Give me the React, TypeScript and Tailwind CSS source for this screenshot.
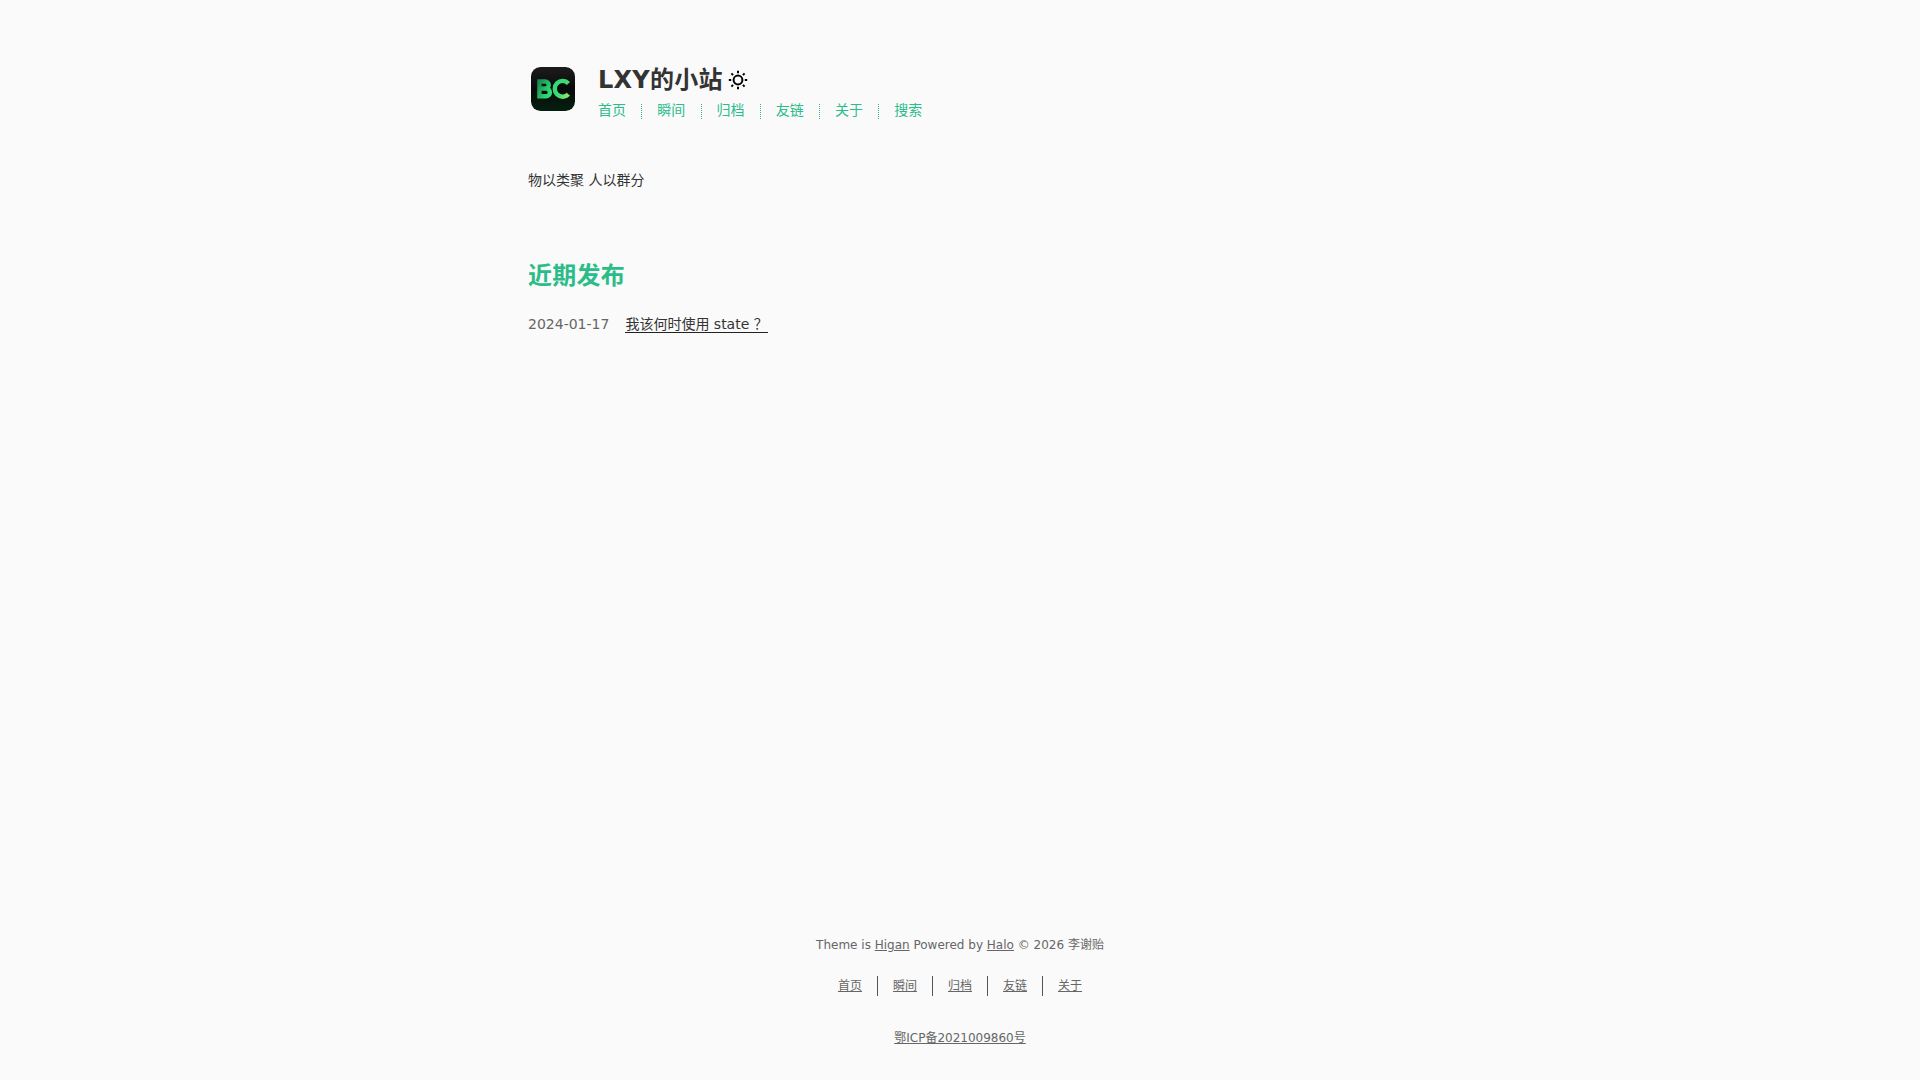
import React from 'react';

interface NavItem {
  label: string;
  href: string;
}

const navItems: NavItem[] = [
  { label: '首页', href: '#' },
  { label: '瞬间', href: '#' },
  { label: '归档', href: '#' },
  { label: '友链', href: '#' },
  { label: '关于', href: '#' },
  { label: '搜索', href: '#' },
];

const posts = [{ date: '2024-01-17', title: '我该何时使用 state ？', href: '#' }];

const Logo = () => (
  <svg className="block size-[50px]" viewBox="0 0 50 50" fill="none">
    <defs>
      <linearGradient id="tile" x1="0" y1="0" x2="0" y2="1">
        <stop offset="0" stopColor="#1c1c1c" />
        <stop offset="0.5" stopColor="#080a09" />
        <stop offset="1" stopColor="#04200f" />
      </linearGradient>
      <linearGradient id="letters" gradientUnits="userSpaceOnUse" x1="9" y1="16" x2="40" y2="34">
        <stop offset="0" stopColor="#128048" />
        <stop offset="0.45" stopColor="#2fd873" />
        <stop offset="0.75" stopColor="#3edb78" />
        <stop offset="1" stopColor="#90ec62" />
      </linearGradient>
    </defs>
    <rect x="3" y="3" width="44" height="44" rx="9.5" fill="url(#tile)" />
    <g stroke="url(#letters)" strokeWidth="4.4">
      <path d="M11.2 17.5h6a3.5 3.5 0 0 1 0 7h-6M17.2 24.5h.8a3.9 3.9 0 0 1 0 7.8h-6.8M11.4 15.3v19.2" />
      <path d="M40.4 19.4a7.9 7.9 0 1 0 0 10.8" />
    </g>
  </svg>
);

const SunIcon = () => (
  <svg className="block size-5" viewBox="0 0 20 20" fill="none" stroke="#000" strokeWidth="2">
    <circle cx="10" cy="10" r="4.4" />
    <path d="M10 .8v2.4M10 16.8v2.4M.8 10h2.4M16.8 10h2.4M3.4 3.4l1.7 1.7M14.9 14.9l1.7 1.7M3.4 16.6l1.7-1.7M14.9 5.1l1.7-1.7" />
  </svg>
);

const Header = () => (
  <header className="flex h-[50px]">
    <a href="#" className="mr-5 w-[50px]">
      <Logo />
    </a>
    <div className="pt-px">
      <div className="flex h-[30px] items-center">
        <h1 className="text-2xl leading-[30px] font-bold tracking-[0.01em] text-[#333]">LXY的小站</h1>
        <button className="ml-[5px]" aria-label="theme">
          <SunIcon />
        </button>
      </div>
      <ul className="mt-[9px] flex">
        {navItems.map((item, i) => (
          <li
            key={item.label}
            className={
              i < navItems.length - 1
                ? 'mr-[15px] h-[15px] border-r border-dotted border-[#2bbc8a] pr-[15.28px]'
                : 'h-[15px]'
            }
          >
            <a href={item.href} className="block leading-[13px] text-[#2bbc8a]">
              {item.label}
            </a>
          </li>
        ))}
      </ul>
    </div>
  </header>
);

const Footer = () => (
  <footer className="mt-auto flex flex-col items-center text-xs text-[#666]">
    <div className="leading-5">
      Theme is <a href="#" className="underline">Higan</a> Powered by{' '}
      <a href="#" className="underline">Halo</a> © 2026 李谢贻
    </div>
    <ul className="mt-[21px] flex">
      {navItems.slice(0, 5).map((item, i) => (
        <li
          key={item.label}
          className={i < 4 ? 'mr-[15px] h-5 border-r border-[#555] pr-[15px]' : 'h-5'}
        >
          <a href={item.href} className="block leading-5 underline">
            {item.label}
          </a>
        </li>
      ))}
    </ul>
    <a href="#" className="mt-8 block leading-5 underline">
      鄂ICP备2021009860号
    </a>
  </footer>
);

const App = () => {
  return (
    <div className="min-h-screen bg-[#fafafa] font-['DejaVu_Sans','Noto_Sans_CJK_SC',sans-serif] text-sm text-[#333]">
      <div className="mx-auto flex min-h-screen w-[864px] flex-col pt-16 pb-8">
        <Header />
        <section className="mt-[54px] leading-6">物以类聚 人以群分</section>
        <section className="mt-[66px]">
          <h2 className="text-2xl leading-9 font-bold tracking-[0.01em] text-[#2bbc8a]">近期发布</h2>
          <ul className="mt-[18px]">
            {posts.map((post) => (
              <li key={post.title} className="flex leading-6">
                <time className="w-[97.4px] text-[#666]">{post.date}</time>
                <a href={post.href} className="h-[21px] border-b border-[#222]">
                  {post.title}
                </a>
              </li>
            ))}
          </ul>
        </section>
        <Footer />
      </div>
    </div>
  );
};

export default App;
